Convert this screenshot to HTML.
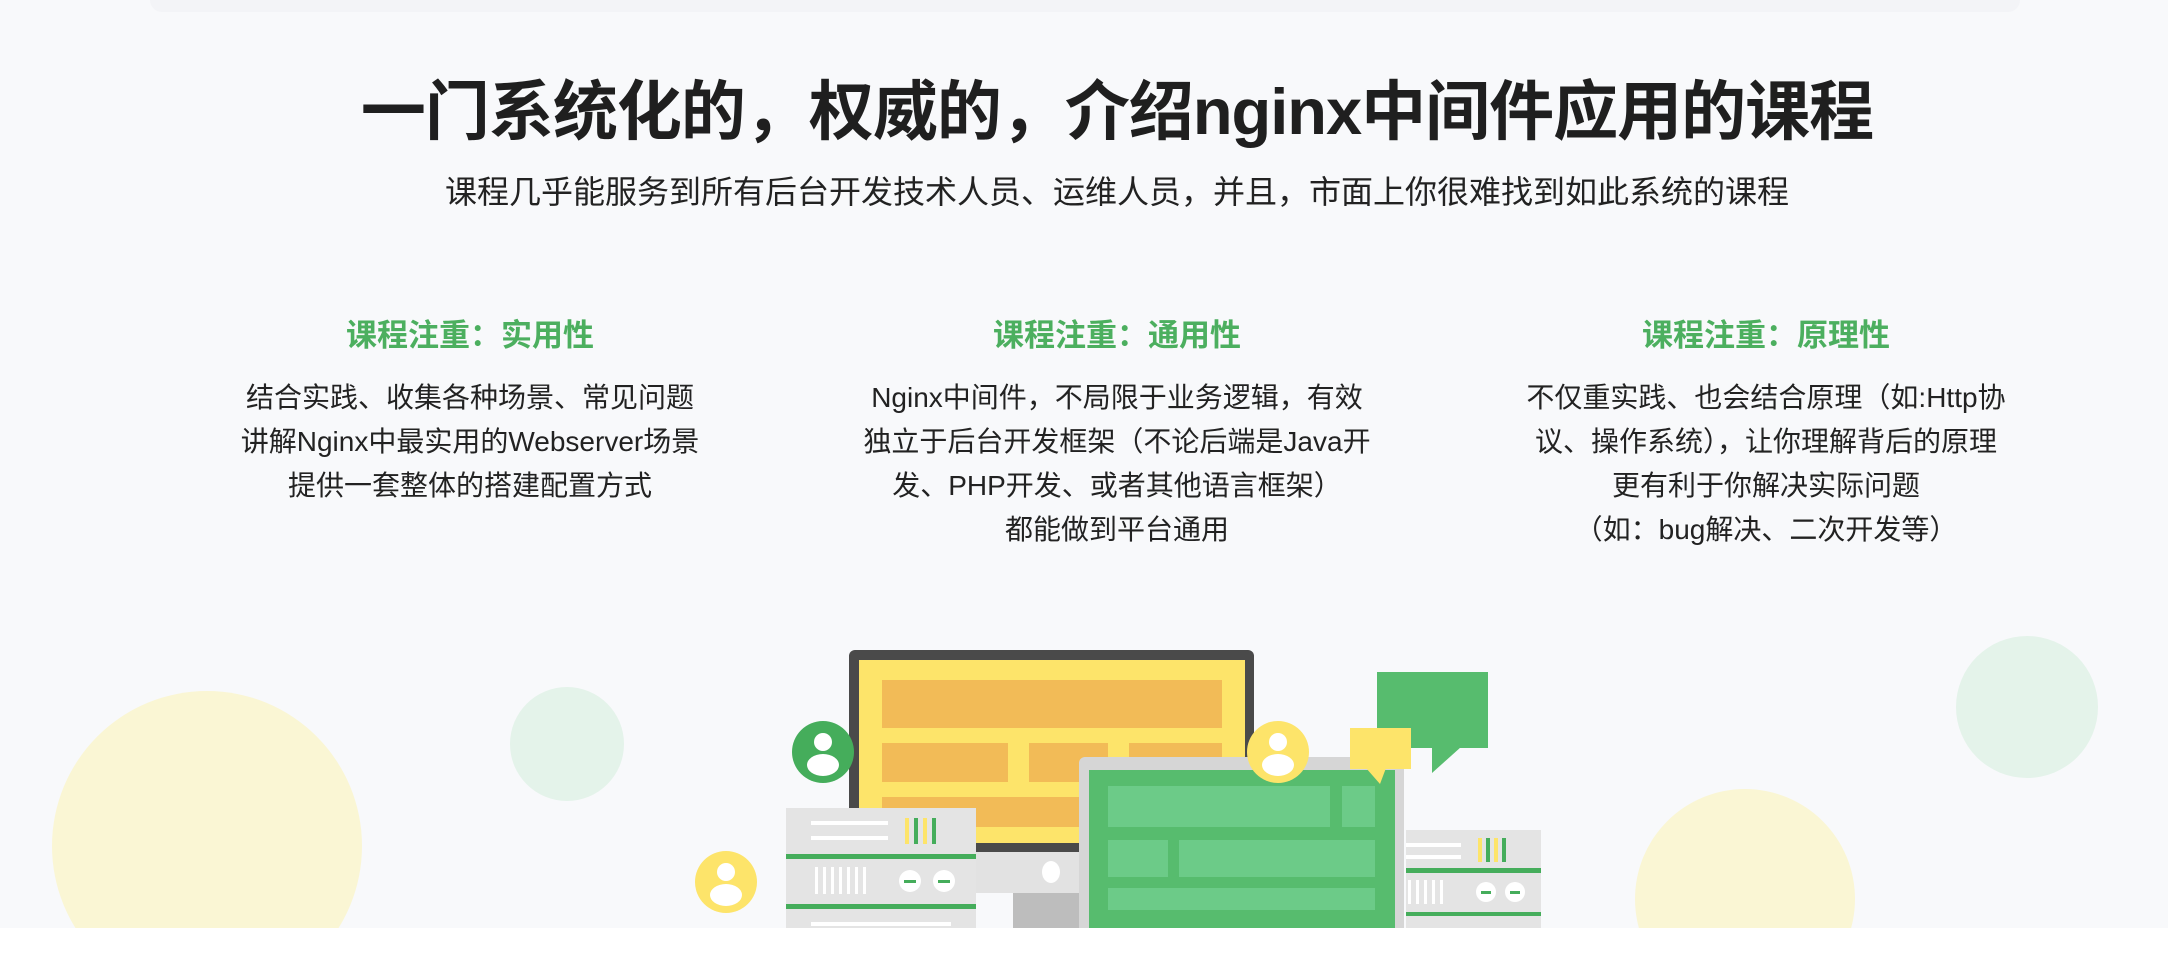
<!DOCTYPE html>
<html><head><meta charset="utf-8"><style>
html,body{margin:0;padding:0}
body{width:2168px;height:966px;position:relative;overflow:hidden;background:#fff;font-family:"Liberation Sans","Noto Sans CJK SC",sans-serif;}
#main{position:absolute;left:0;top:0;width:2168px;height:928px;background:#f8f9fb;overflow:hidden}
.c{position:absolute;border-radius:50%}
h1{position:absolute;left:66px;width:2102px;top:72px;margin:0;text-align:center;font-size:65px;font-weight:bold;color:#1f1f1f;line-height:80px;letter-spacing:-1px}
.sub{position:absolute;left:66px;width:2102px;top:171px;text-align:center;font-size:32px;color:#222;line-height:42px}
.col{position:absolute;top:314px;width:640px;text-align:center}
.col h3{margin:0;font-size:31px;color:#4caf5f;font-weight:bold;line-height:44px}
.col p{margin:18px 0 0;font-size:28px;color:#222;line-height:44px}
</style></head><body>
<div id="main">
<div class="c" style="left:52px;top:691px;width:310px;height:310px;background:#faf6d4"></div>
<div class="c" style="left:510px;top:687px;width:114px;height:114px;background:#e4f3ea"></div>
<div class="c" style="left:1956px;top:636px;width:142px;height:142px;background:#e4f3ea"></div>
<div class="c" style="left:1635px;top:789px;width:220px;height:220px;background:#faf6d4"></div>
<div style="position:absolute;left:150px;top:0;width:1870px;height:12px;background:#f3f4f7;border-radius:0 0 40px 40px"></div>
<h1>一门系统化的，权威的，介绍nginx中间件应用的课程</h1>
<div class="sub">课程几乎能服务到所有后台开发技术人员、运维人员，并且，市面上你很难找到如此系统的课程</div>
<div class="col" style="left:150px"><h3>课程注重：实用性</h3><p>结合实践、收集各种场景、常见问题<br>讲解Nginx中最实用的Webserver场景<br>提供一套整体的搭建配置方式</p></div>
<div class="col" style="left:797px"><h3>课程注重：通用性</h3><p>Nginx中间件，不局限于业务逻辑，有效<br>独立于后台开发框架（不论后端是Java开<br>发、PHP开发、或者其他语言框架）<br>都能做到平台通用</p></div>
<div class="col" style="left:1446px"><h3>课程注重：原理性</h3><p>不仅重实践、也会结合原理（如:Http协<br>议、操作系统），让你理解背后的原理<br>更有利于你解决实际问题<br>（如：bug解决、二次开发等）</p></div>
<svg style="position:absolute;left:0;top:0" width="2168" height="928">
<rect x="849" y="650" width="405" height="203" rx="6" fill="#4a4a4a"/>
<rect x="859" y="660" width="386" height="183" fill="#fde46a"/>
<rect x="882" y="680" width="340" height="48" fill="#f2bb57"/>
<rect x="882" y="743" width="126" height="39" fill="#f2bb57"/>
<rect x="1029" y="743" width="79" height="39" fill="#f2bb57"/>
<rect x="1129" y="743" width="93" height="39" fill="#f2bb57"/>
<rect x="882" y="797" width="340" height="30" fill="#f2bb57"/>
<rect x="976" y="852" width="106" height="41" fill="#e2e2e2"/>
<ellipse cx="1051" cy="872" rx="9" ry="11" fill="#fff"/>
<rect x="1013" y="893" width="69" height="35" fill="#bdbdbd"/>
<rect x="1079" y="757" width="325" height="180" rx="6" fill="#d6d6d6"/>
<rect x="1089" y="770" width="306" height="160" fill="#57bc6e"/>
<rect x="1108" y="786" width="222" height="41" fill="#6ccb88"/>
<rect x="1342" y="786" width="33" height="41" fill="#6ccb88"/>
<rect x="1108" y="840" width="60" height="37" fill="#6ccb88"/>
<rect x="1179" y="840" width="196" height="37" fill="#6ccb88"/>
<rect x="1108" y="888" width="267" height="22" fill="#6ccb88"/>
<rect x="1377" y="672" width="111" height="76" fill="#57bc6e"/>
<polygon points="1432,747 1461,747 1432,773" fill="#57bc6e"/>
<rect x="1350" y="728" width="61" height="41" fill="#fde46a"/>
<polygon points="1366,768 1386,768 1380,784" fill="#fde46a"/>
<g><circle cx="823" cy="752" r="31" fill="#45ad5b"/><circle cx="823" cy="742" r="9" fill="#fff"/><ellipse cx="823" cy="765" rx="16" ry="11" fill="#fff"/></g>
<g><circle cx="1278" cy="752" r="31" fill="#fde46a"/><circle cx="1278" cy="742" r="9" fill="#fff"/><ellipse cx="1278" cy="765" rx="16" ry="11" fill="#fff"/></g>
<g><circle cx="726" cy="882" r="31" fill="#fde46a"/><circle cx="726" cy="872" r="9" fill="#fff"/><ellipse cx="726" cy="895" rx="16" ry="11" fill="#fff"/></g>
<rect x="786" y="808" width="190" height="125" fill="#e4e4e4"/>
<rect x="811" y="821" width="77" height="4" fill="#fff"/>
<rect x="811" y="836" width="77" height="4" fill="#fff"/>
<rect x="905" y="818" width="4" height="26" fill="#fde46a"/><rect x="914" y="818" width="4" height="26" fill="#45ad5b"/><rect x="923" y="818" width="4" height="26" fill="#fde46a"/><rect x="932" y="818" width="4" height="26" fill="#45ad5b"/>
<rect x="786" y="854" width="190" height="5" fill="#45ad5b"/>
<g fill="#fff"><rect x="815" y="867" width="3" height="27"/><rect x="823" y="867" width="3" height="27"/><rect x="831" y="867" width="3" height="27"/><rect x="839" y="867" width="3" height="27"/><rect x="847" y="867" width="3" height="27"/><rect x="855" y="867" width="3" height="27"/><rect x="863" y="867" width="3" height="27"/></g>
<circle cx="910" cy="881" r="11" fill="#fff"/><rect x="904" y="880" width="12" height="3" fill="#45ad5b"/>
<circle cx="944" cy="881" r="11" fill="#fff"/><rect x="938" y="880" width="12" height="3" fill="#45ad5b"/>
<rect x="786" y="904" width="190" height="5" fill="#45ad5b"/>
<rect x="811" y="922" width="140" height="4" fill="#fff"/>
<rect x="1406" y="830" width="135" height="100" fill="#e4e4e4"/>
<rect x="1406" y="843" width="55" height="4" fill="#fff"/><rect x="1406" y="855" width="55" height="4" fill="#fff"/>
<rect x="1478" y="838" width="4" height="24" fill="#fde46a"/><rect x="1486" y="838" width="4" height="24" fill="#45ad5b"/><rect x="1494" y="838" width="4" height="24" fill="#fde46a"/><rect x="1502" y="838" width="4" height="24" fill="#45ad5b"/>
<rect x="1406" y="868" width="135" height="5" fill="#45ad5b"/>
<g fill="#fff"><rect x="1408" y="880" width="3" height="24"/><rect x="1416" y="880" width="3" height="24"/><rect x="1424" y="880" width="3" height="24"/><rect x="1432" y="880" width="3" height="24"/><rect x="1440" y="880" width="3" height="24"/></g>
<circle cx="1486" cy="892" r="10" fill="#fff"/><rect x="1481" y="891" width="10" height="3" fill="#45ad5b"/>
<circle cx="1515" cy="892" r="10" fill="#fff"/><rect x="1510" y="891" width="10" height="3" fill="#45ad5b"/>
<rect x="1406" y="912" width="135" height="4" fill="#45ad5b"/>
</svg>
</div>
</body></html>
